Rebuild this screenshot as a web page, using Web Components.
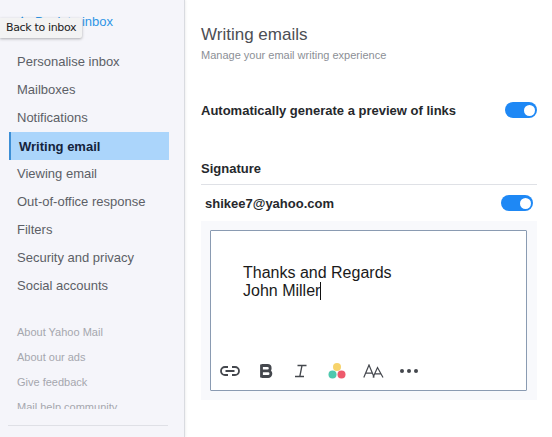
<!DOCTYPE html>
<html>
<head>
<meta charset="utf-8">
<style>
  html, body { margin: 0; height: 437px; overflow: hidden; background: #fff; }
  body { font-family: "Liberation Sans", Arial, sans-serif; }
</style>
</head>
<body>
<settings-page>
  <settings-nav slot="nav">
    <nav-link>Personalise inbox</nav-link>
    <nav-link>Mailboxes</nav-link>
    <nav-link>Notifications</nav-link>
    <nav-link active>Writing email</nav-link>
    <nav-link>Viewing email</nav-link>
    <nav-link>Out-of-office response</nav-link>
    <nav-link>Filters</nav-link>
    <nav-link>Security and privacy</nav-link>
    <nav-link>Social accounts</nav-link>
    <foot-link slot="foot">About Yahoo Mail</foot-link>
    <foot-link slot="foot">About our ads</foot-link>
    <foot-link slot="foot">Give feedback</foot-link>
    <foot-link slot="foot">Mail help community</foot-link>
  </settings-nav>
  <writing-panel slot="main"></writing-panel>
</settings-page>

<script>
class SettingsPage extends HTMLElement {
  connectedCallback() {
    const shadowRoot = this.attachShadow({ mode: "open" });
    shadowRoot.innerHTML = `
    <style>
    :host { display: flex; height: 437px; overflow: hidden; }
    .nav { flex: 0 0 185px; }
    .main { flex: 1; min-width: 0; }
    </style>
    <div class="nav"><slot name="nav"></slot></div>
    <div class="main"><slot name="main"></slot></div>
    `;
  }
}

class SettingsNav extends HTMLElement {
  connectedCallback() {
    const shadowRoot = this.attachShadow({ mode: "open" });
    shadowRoot.innerHTML = `
    <style>
    :host {
      background: #f5f5fa;
      border-right: 1px solid #d9dbe0;
      box-shadow: 1px 0 2px rgba(0,0,0,0.06);
      box-sizing: border-box;
      display: block;
      height: 437px;
      overflow: hidden;
      position: relative;
      width: 185px;
    }
    .back {
      align-items: center;
      color: #2f96e6;
      display: flex;
      font-size: 13px;
      height: 16px;
      margin: 13px 0 0 17px;
    }
    .back svg { margin-right: 8px; }
    .links { margin-top: 19px; }
    .foot {
      height: 89px;
      margin: 20px 0 0;
      overflow: hidden;
    }
    .rule {
      border-top: 1px solid #dfe0e6;
      margin: 16px 16px 0 8px;
    }
    .tip {
      background: #f3f3f3;
      border-radius: 0 2px 2px 0;
      box-shadow: 0 1px 3px rgba(0,0,0,0.3);
      color: #222;
      font: 11px/20px "DejaVu Sans", sans-serif;
      left: 0;
      letter-spacing: -0.35px;
      padding: 0 6px;
      position: absolute;
      top: 18px;
      white-space: nowrap;
    }
    </style>
    <div class="back">
      <svg width="10" height="10" viewBox="0 0 10 10" fill="none" stroke="#2f96e6" stroke-width="1.4"><path d="M6 1 2 5l4 4"/></svg>
      <span>Back to inbox</span>
    </div>
    <div class="links"><slot></slot></div>
    <div class="foot"><slot name="foot"></slot></div>
    <div class="rule"></div>
    <div class="tip">Back to inbox</div>
    `;
  }
}

class NavLink extends HTMLElement {
  connectedCallback() {
    const shadowRoot = this.attachShadow({ mode: "open" });
    shadowRoot.innerHTML = `
    <style>
    :host {
      color: #5c5f66;
      display: block;
      font-size: 13px;
      height: 28px;
      line-height: 28px;
      margin-right: 15px;
      margin-left: 9px;
      padding-left: 8px;
      white-space: nowrap;
    }
    :host([active]) {
      background: #abd5fb;
      border-left: 2px solid #3d8fd6;
      color: #14233c;
      font-weight: 700;
      line-height: 29px;
      padding-left: 8px;
    }
    </style>
    <slot></slot>
    `;
  }
}

class FootLink extends HTMLElement {
  connectedCallback() {
    const shadowRoot = this.attachShadow({ mode: "open" });
    shadowRoot.innerHTML = `
    <style>
    :host {
      color: #a5a7ae;
      display: block;
      font-size: 11px;
      height: 25px;
      line-height: 25px;
      padding-left: 17px;
      white-space: nowrap;
    }
    </style>
    <slot></slot>
    `;
  }
}

class ToggleSwitch extends HTMLElement {
  connectedCallback() {
    const shadowRoot = this.attachShadow({ mode: "open" });
    shadowRoot.innerHTML = `
    <style>
    :host {
      align-items: center;
      background: #1e88f5;
      border-radius: 8px;
      box-sizing: border-box;
      display: flex;
      height: 16px;
      justify-content: flex-end;
      padding-right: 2px;
      width: 32px;
    }
    .knob { background: #fff; border-radius: 50%; height: 11px; width: 11px; }
    </style>
    <div class="knob"></div>
    `;
  }
}

class SignatureEditor extends HTMLElement {
  connectedCallback() {
    const shadowRoot = this.attachShadow({ mode: "open" });
    shadowRoot.innerHTML = `
    <style>
    :host {
      background: #f8f9fc;
      display: block;
      margin-top: 10px;
      padding: 9px 10px 9px 9px;
    }
    .box {
      background: #fff;
      border: 1px solid #8a9bb2;
      border-radius: 1px;
      box-sizing: border-box;
      display: flex;
      flex-direction: column;
      height: 161px;
    }
    .text {
      color: #1a1a1a;
      flex: 1;
      font-size: 16px;
      line-height: 18px;
      padding: 33px 0 0 32px;
    }
    .caret {
      border-left: 1px solid #111;
      display: inline-block;
      height: 18px;
      vertical-align: top;
    }
    .tools {
      align-items: center;
      display: flex;
      height: 20px;
      margin-bottom: 9px;
      padding-left: 9px;
    }
    .tools svg { display: block; flex: none; }
    </style>
    <div class="box">
      <div class="text">Thanks and Regards<br>John Miller<span class="caret"></span></div>
      <div class="tools">
        <svg width="20" height="10" viewBox="0 0 20 10" fill="none" stroke="#44474d" stroke-width="1.8" style="margin-right:19px">
          <path d="M8 1H5a4 4 0 0 0 0 8h3M12 1h3a4 4 0 0 1 0 8h-3M5.5 5h9"/>
        </svg>
        <svg width="15" height="14" viewBox="0 0 15 14" fill="none" stroke="#44474d" stroke-width="2.8" style="margin-right:20px">
          <path d="M2.5 .5v13M2.5 1.5h6a2.6 2.6 0 0 1 0 5.4h-6M2.5 6.9h6.6a2.8 2.8 0 0 1 0 5.6H2.5"/>
        </svg>
        <svg width="14" height="14" viewBox="0 0 14 14" fill="none" stroke="#44474d" stroke-width="1.3" style="margin-right:20px">
          <path d="M3.5 1.5h9M8 1.5 5.8 12.5M1 12.5h9"/>
        </svg>
        <svg width="18" height="18" viewBox="0 0 18 18" style="margin-right:17px">
          <circle cx="9" cy="5" r="4" fill="#f7d36b"/>
          <circle cx="4.5" cy="12.5" r="4" fill="#4fc8ae"/>
          <circle cx="13.5" cy="12.5" r="4" fill="#ee5a6c"/>
        </svg>
        <svg width="21" height="14" viewBox="0 0 21 14" fill="none" stroke="#44474d" stroke-width="1.2" style="margin-right:16px">
          <path d="M.8 13.5 6 1l5.2 12.5M2.6 9.2h6.8M10 13.5 14.5 3.5 20 13.5M12 9.8h5.8"/>
        </svg>
        <svg width="18" height="4" viewBox="0 0 18 4" fill="#44474d">
          <circle cx="2" cy="2" r="2"/><circle cx="9" cy="2" r="2"/><circle cx="16" cy="2" r="2"/>
        </svg>
      </div>
    </div>
    `;
  }
}

class WritingPanel extends HTMLElement {
  connectedCallback() {
    const shadowRoot = this.attachShadow({ mode: "open" });
    shadowRoot.innerHTML = `
    <style>
    :host {
      color: #26282c;
      display: block;
      padding: 26px 15px 0 16px;
    }
    h1 { color: #4c4f55; font-size: 17px; font-weight: 400; line-height: 18px; margin: 0; }
    .sub { color: #8c8f96; font-size: 11px; line-height: 13px; margin-top: 5px; }
    .row { align-items: center; display: flex; justify-content: space-between; }
    .preview { font-size: 13px; font-weight: 700; height: 16px; margin-top: 40px; }
    .sig { border-bottom: 1px solid #dfe1e6; font-size: 13px; font-weight: 700; height: 23px; line-height: 16px; margin-top: 43px; }
    .account { font-size: 13px; font-weight: 700; height: 16px; margin-top: 10px; padding: 0 4px; }
    </style>
    <h1>Writing emails</h1>
    <div class="sub">Manage your email writing experience</div>
    <div class="row preview"><span>Automatically generate a preview of links</span><toggle-switch></toggle-switch></div>
    <div class="sig">Signature</div>
    <div class="row account"><span>shikee7@yahoo.com</span><toggle-switch></toggle-switch></div>
    <signature-editor></signature-editor>
    `;
  }
}

customElements.define("settings-page", SettingsPage);
customElements.define("settings-nav", SettingsNav);
customElements.define("nav-link", NavLink);
customElements.define("foot-link", FootLink);
customElements.define("toggle-switch", ToggleSwitch);
customElements.define("signature-editor", SignatureEditor);
customElements.define("writing-panel", WritingPanel);
</script>
</body>
</html>
